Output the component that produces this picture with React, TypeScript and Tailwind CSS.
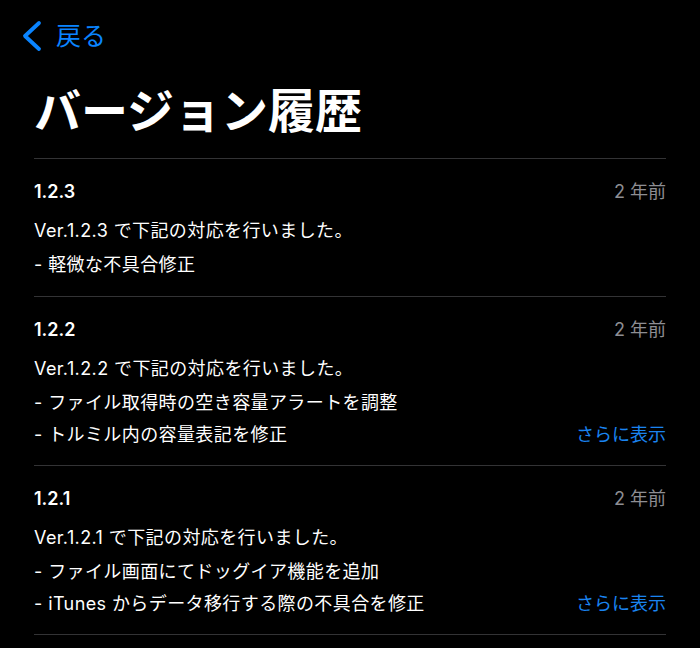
import React from "react";

type Entry = {
  version: string;
  lines: string[];
  more?: boolean;
};

const entries: Entry[] = [
  {
    version: "1.2.3",
    lines: ["Ver.1.2.3 で下記の対応を行いました。", "- 軽微な不具合修正"],
  },
  {
    version: "1.2.2",
    lines: [
      "Ver.1.2.2 で下記の対応を行いました。",
      "- ファイル取得時の空き容量アラートを調整",
      "- トルミル内の容量表記を修正",
    ],
    more: true,
  },
  {
    version: "1.2.1",
    lines: [
      "Ver.1.2.1 で下記の対応を行いました。",
      "- ファイル画面にてドッグイア機能を追加",
      "- iTunes からデータ移行する際の不具合を修正",
    ],
    more: true,
  },
];

export default function App() {
  return (
    <div
      className="w-[700px] h-[648px] overflow-hidden bg-black text-white"
      style={{ fontFamily: 'Inter, "Noto Sans CJK JP", "Noto Sans", sans-serif' }}
    >
      {/* nav */}
      <div className="flex items-center h-[52px] pt-[20px] pl-[20px]">
        <svg width="22" height="32" viewBox="0 0 22 32" className="shrink-0">
          <path
            d="M19 3 L5 16 L19 29"
            fill="none"
            stroke="#0a84ff"
            strokeWidth="3.8"
            strokeLinecap="round"
            strokeLinejoin="round"
          />
        </svg>
        <span className="ml-[14px] text-[25px] leading-[32px] text-[#0a84ff]">戻る</span>
      </div>

      {/* title */}
      <div className="px-[34px] pt-[32px] pb-[20px]">
        <h1 className="text-[47px] leading-[54px] font-bold">バージョン履歴</h1>
      </div>

      {/* list */}
      <div className="mx-[34px]">
        {entries.map((e) => (
          <div key={e.version} className="border-t border-[#333335] pt-[19px] pb-[15px]">
            <div className="flex items-center justify-between h-[26px]">
              <span className="text-[18px] font-semibold">{e.version}</span>
              <span className="text-[18px] text-[#8e8e93]">2 年前</span>
            </div>
            <div className="mt-[9px] flex flex-col">
              {e.lines.map((l, i) => {
                const last = i === e.lines.length - 1;
                return (
                  <div
                    key={i}
                    className={`flex items-center justify-between text-[18px] ${
                      last && e.lines.length > 2 ? "h-[31px]" : "h-[34px]"
                    }`}
                  >
                    <span className="tracking-[0.4px]">{l}</span>
                    {last && e.more ? (
                      <span className="text-[#1a84f0]">さらに表示</span>
                    ) : null}
                  </div>
                );
              })}
            </div>
          </div>
        ))}
        <div className="border-t border-[#333335]" />
      </div>
    </div>
  );
}
